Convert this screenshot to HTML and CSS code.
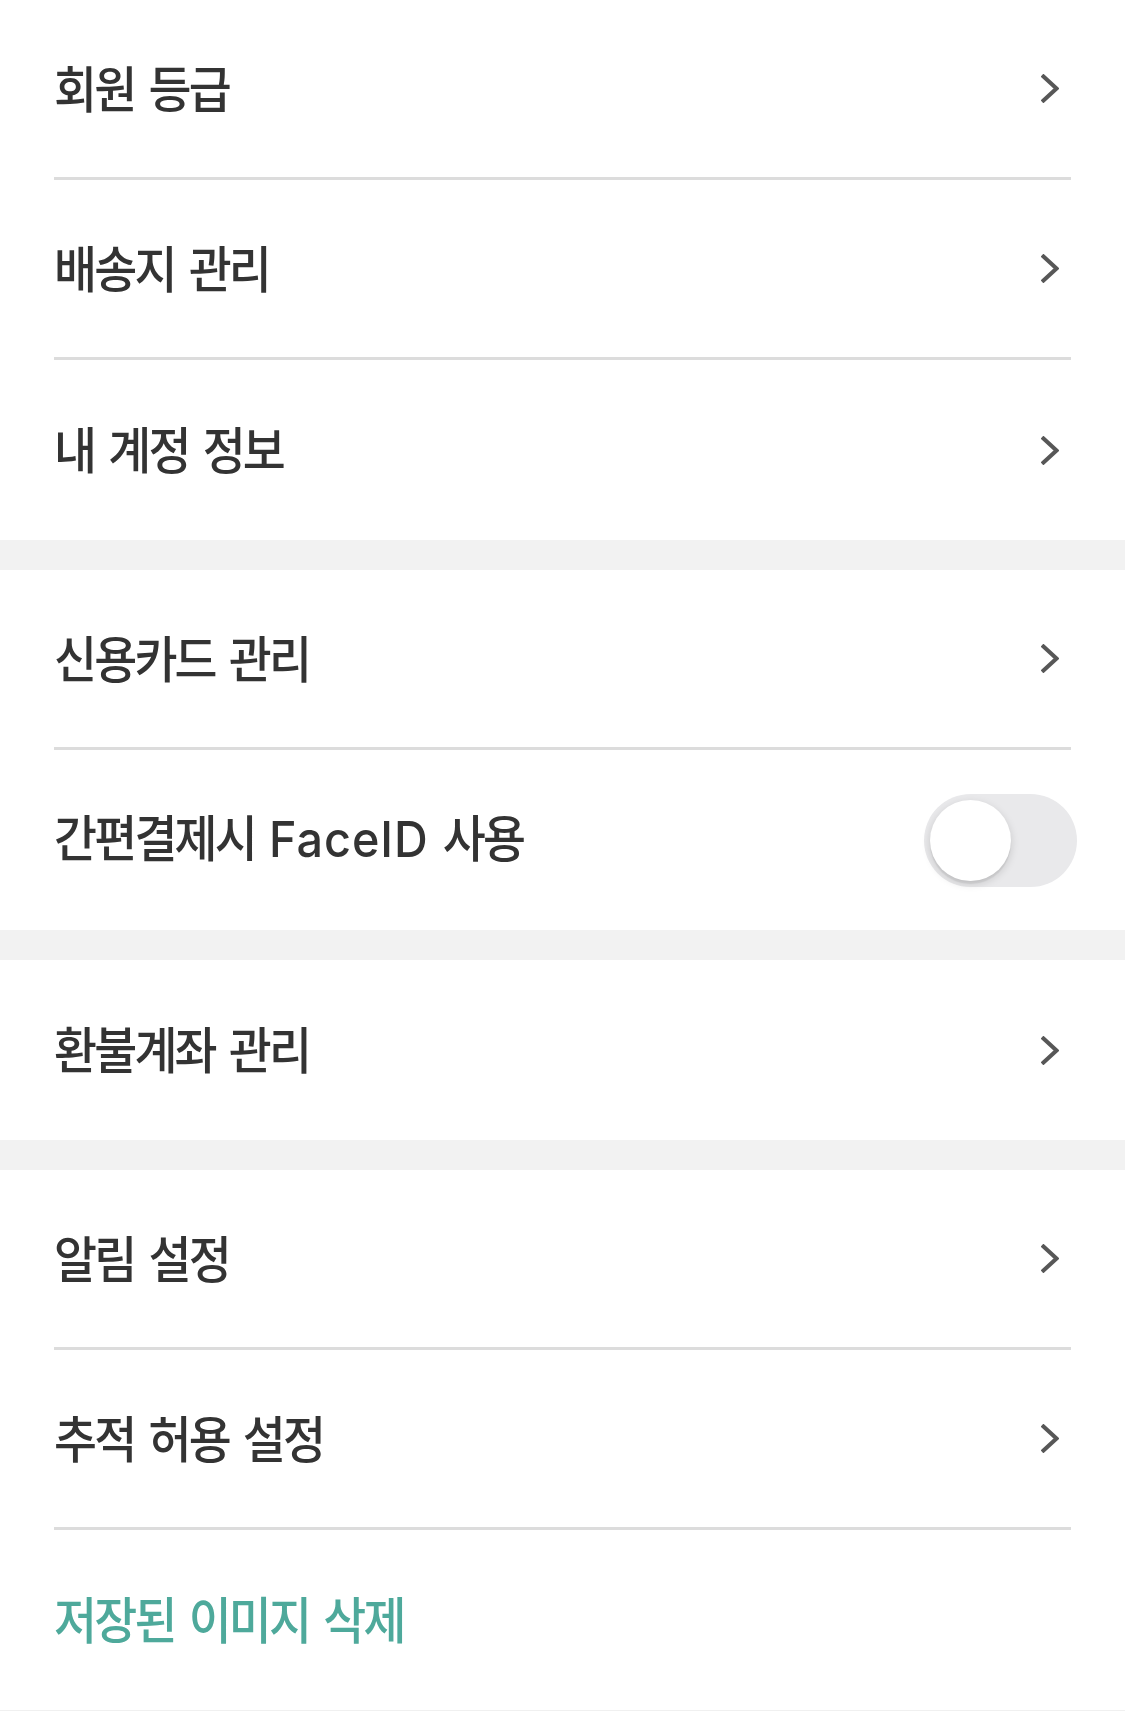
FILE: index.html
```html
<!DOCTYPE html>
<html lang="ko">
<head>
<meta charset="utf-8">
<title>설정</title>
<link rel="stylesheet" href="styles.css">
</head>
<body>
<div class="page">
  <section class="group">
    <div class="row"><span class="label">회원 등급</span><svg class="chev" viewBox="0 0 18 29"><polyline points="2.5,2.5 15.5,14.5 2.5,26.5"/></svg></div>
    <div class="row"><span class="label">배송지 관리</span><svg class="chev" viewBox="0 0 18 29"><polyline points="2.5,2.5 15.5,14.5 2.5,26.5"/></svg></div>
    <div class="row"><span class="label">내 계정 정보</span><svg class="chev" viewBox="0 0 18 29"><polyline points="2.5,2.5 15.5,14.5 2.5,26.5"/></svg></div>
  </section>
  <section class="group">
    <div class="row"><span class="label">신용카드 관리</span><svg class="chev" viewBox="0 0 18 29"><polyline points="2.5,2.5 15.5,14.5 2.5,26.5"/></svg></div>
    <div class="row"><span class="label">간편결제시 <span class="latin">FaceID</span> 사용</span><div class="toggle"><div class="knob"></div></div></div>
  </section>
  <section class="group">
    <div class="row"><span class="label">환불계좌 관리</span><svg class="chev" viewBox="0 0 18 29"><polyline points="2.5,2.5 15.5,14.5 2.5,26.5"/></svg></div>
  </section>
  <section class="group last">
    <div class="row"><span class="label">알림 설정</span><svg class="chev" viewBox="0 0 18 29"><polyline points="2.5,2.5 15.5,14.5 2.5,26.5"/></svg></div>
    <div class="row"><span class="label">추적 허용 설정</span><svg class="chev" viewBox="0 0 18 29"><polyline points="2.5,2.5 15.5,14.5 2.5,26.5"/></svg></div>
    <div class="row"><span class="label accent">저장된 이미지 삭제</span></div>
  </section>
</div>
</body>
</html>
```
FILE: styles.css
```css
html, body {
  margin: 0;
  padding: 0;
  background: #ffffff;
}
.page {
  display: flex;
  flex-direction: column;
  gap: 30px;
  background: #f2f2f2;
  font-family: "Noto Sans CJK KR", "Noto Sans", sans-serif;
}
.group {
  background: #ffffff;
}
.group.last {
  border-bottom: 1px solid #f0f0f0;
}
.row {
  margin: 0 54px;
  height: 177px;
  border-bottom: 3px solid #dcdcdc;
  display: flex;
  align-items: center;
  justify-content: space-between;
}
.row:last-child {
  border-bottom: none;
  height: 180px;
}
.label {
  display: block;
  font-size: 50px;
  font-weight: 500;
  color: #333333;
  letter-spacing: -3px;
  word-spacing: 4px;
  line-height: 1;
  margin-bottom: 6px;
  white-space: nowrap;
  transform: scaleX(0.935);
  transform-origin: left center;
}
.latin {
  font-family: "Inter", "Noto Sans", sans-serif;
  letter-spacing: 1px;
  font-weight: 500;
}
.accent {
  color: #4ea99b;
}
.chev {
  width: 18px;
  height: 29px;
  margin-right: 12px;
  fill: none;
  stroke: #575757;
  stroke-width: 4;
  stroke-linecap: square;
  stroke-linejoin: miter;
}
.toggle {
  width: 153px;
  height: 93px;
  border-radius: 47px;
  background: #e9e9eb;
  margin-right: -6px;
  padding: 6px;
  box-sizing: border-box;
  display: flex;
  align-items: center;
}
.knob {
  width: 81px;
  height: 81px;
  border-radius: 50%;
  background: #ffffff;
  box-shadow: 0 3px 8px rgba(0, 0, 0, 0.15), 0 3px 1px rgba(0, 0, 0, 0.06);
}
```
